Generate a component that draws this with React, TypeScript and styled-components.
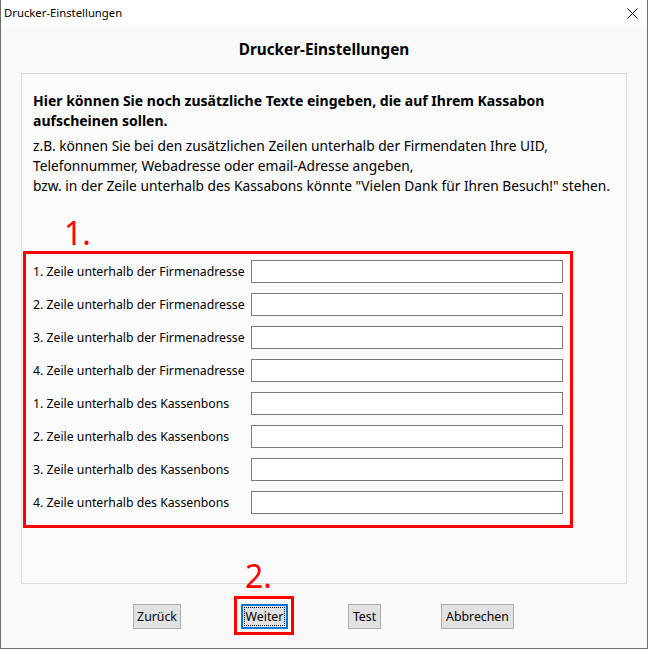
import React from "react";
import styled, { createGlobalStyle } from "styled-components";

const Global = createGlobalStyle`
  html, body { margin: 0; padding: 0; background: #ffffff; }
  body { font-family: "Noto Sans", "Open Sans", sans-serif; color: #000; }
  * { box-sizing: border-box; }
`;

const Window = styled.div`
  width: 648px;
  height: 649px;
  display: flex;
  flex-direction: column;
  border-left: 1px solid #6e6e6e;
  border-right: 1px solid #6e6e6e;
  border-bottom: 1px solid #6e6e6e;
  background: #f9f9f9;
`;

const TitleBar = styled.div`
  height: 26px;
  flex: none;
  background: #ffffff;
  display: flex;
  align-items: center;
  justify-content: space-between;
  padding: 0 9px 0 3px;
`;

const TitleText = styled.span`
  font-size: 11.3px;
  line-height: 16px;
`;

const CloseIcon = styled.svg`
  width: 11px;
  height: 11px;
  display: block;
`;

const Body = styled.div`
  flex: 1;
  display: flex;
  flex-direction: column;
  padding: 0 20px;
`;

const Heading = styled.h1`
  margin: 0;
  height: 47px;
  display: flex;
  align-items: center;
  justify-content: center;
  font-size: 15.3px;
  font-weight: 700;
  padding-bottom: 1px;
`;

const Panel = styled.div`
  height: 511px;
  border: 1px solid #dcdcdc;
  background: #fafafa;
  display: flex;
  flex-direction: column;
`;

const Intro = styled.div`
  padding: 17px 11px 0;
  line-height: 20px;
  white-space: nowrap;
`;

const Lead = styled.p`
  margin: 0 0 5px;
  font-size: 14px;
  font-weight: 700;
`;

const Description = styled.p`
  margin: 0;
  font-size: 13.75px;
`;

const AnnotationNumber = styled.div<{ $m: string }>`
  color: #ff0000;
  font-size: 32px;
  line-height: 32px;
  margin: ${(p) => p.$m};
`;

const FieldBox = styled.div`
  margin: 0 53px 0 1px;
  border: 3px solid #ff0000;
  padding: 6px 7px 11px 7px;
  display: grid;
  grid-template-columns: 1fr 312px;
  column-gap: 6px;
  row-gap: 10px;
  align-items: center;
`;

const FieldLabel = styled.label`
  font-size: 12.25px;
  line-height: 16px;
  white-space: nowrap;
`;

const TextInput = styled.input`
  height: 23px;
  width: 312px;
  border: 1px solid #7a7a7a;
  background: #ffffff;
  margin: 0;
  padding: 0 3px;
  font-family: inherit;
  font-size: 12px;
  outline: none;
`;

const ButtonRow = styled.div`
  display: flex;
  justify-content: center;
  gap: 60px;
  padding-top: 20px;
  padding-right: 1px;
`;

const Button = styled.button<{ $focused?: boolean; $width: number }>`
  height: 25px;
  width: ${(p) => p.$width}px;
  padding: 0;
  display: flex;
  align-items: center;
  justify-content: center;
  background: #e1e1e1;
  border: ${(p) => (p.$focused ? "2px solid #0078d7" : "1px solid #adadad")};
  font-family: inherit;
  font-size: 12.3px;
  color: #000;
  margin: 0;
`;

const FocusRing = styled.span`
  display: block;
  width: 100%;
  margin: 0 1px;
  border: 1px dotted #000;
  line-height: 17px;
`;

const Highlight = styled.span`
  position: relative;
  display: inline-flex;
  border: 3px solid #ff0000;
  padding: 5px 3px 3px 4px;
  margin: -8px -6px -6px -7px;
  align-self: center;
`;

const OverlayNumber = styled.span`
  position: absolute;
  left: 8px;
  top: -39px;
  color: #ff0000;
  font-size: 32px;
  line-height: 32px;
`;

const rows = [
  "1. Zeile unterhalb der Firmenadresse",
  "2. Zeile unterhalb der Firmenadresse",
  "3. Zeile unterhalb der Firmenadresse",
  "4. Zeile unterhalb der Firmenadresse",
  "1. Zeile unterhalb des Kassenbons",
  "2. Zeile unterhalb des Kassenbons",
  "3. Zeile unterhalb des Kassenbons",
  "4. Zeile unterhalb des Kassenbons",
];

export default function App() {
  return (
    <>
      <Global />
      <Window>
        <TitleBar>
          <TitleText>Drucker-Einstellungen</TitleText>
          <CloseIcon viewBox="0 0 11 11">
            <path d="M0.5 0.5 L10.5 10.5 M10.5 0.5 L0.5 10.5" stroke="#000" strokeWidth="1" fill="none" />
          </CloseIcon>
        </TitleBar>
        <Body>
          <Heading>Drucker-Einstellungen</Heading>
          <Panel>
            <Intro>
              <Lead>
                Hier können Sie noch zusätzliche Texte eingeben, die auf Ihrem Kassabon
                <br />
                aufscheinen sollen.
              </Lead>
              <Description>
                z.B. können Sie bei den zusätzlichen Zeilen unterhalb der Firmendaten Ihre UID,
                <br />
                Telefonnummer, Webadresse oder email-Adresse angeben,
                <br />
                bzw. in der Zeile unterhalb des Kassabons könnte "Vielen Dank für Ihren Besuch!" stehen.
              </Description>
            </Intro>
            <AnnotationNumber $m="21px 0 2px 42px">1.</AnnotationNumber>
            <FieldBox>
              {rows.map((r) => (
                <React.Fragment key={r}>
                  <FieldLabel>{r}</FieldLabel>
                  <TextInput type="text" />
                </React.Fragment>
              ))}
            </FieldBox>
          </Panel>
          <ButtonRow>
            <Button $width={48}>Zurück</Button>
            <Highlight>
              <OverlayNumber>2.</OverlayNumber>
              <Button $focused $width={47}>
                <FocusRing>Weiter</FocusRing>
              </Button>
            </Highlight>
            <Button $width={33}>Test</Button>
            <Button $width={73}>Abbrechen</Button>
          </ButtonRow>
        </Body>
      </Window>
    </>
  );
}
